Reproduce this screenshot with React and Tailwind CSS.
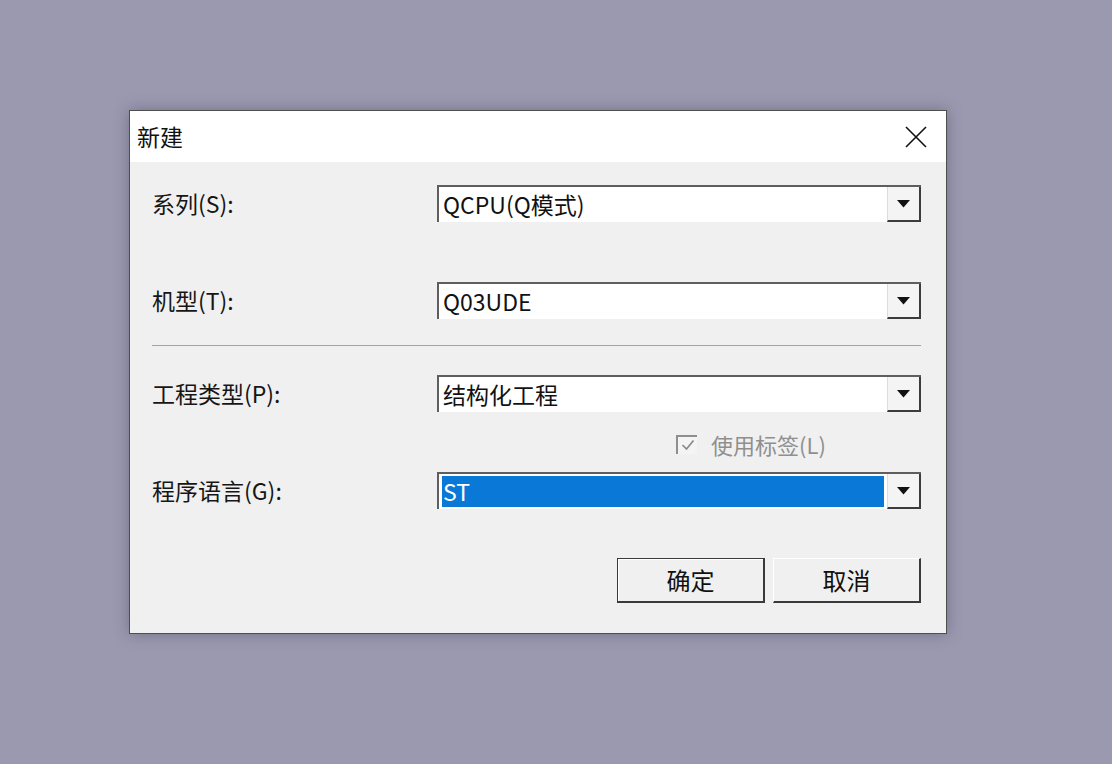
import React from 'react';

function Arrow() {
  return (
    <svg width="13" height="8" viewBox="0 0 13 8" className="block">
      <path d="M0 0 H13 L6.5 7.5 Z" fill="#111" />
    </svg>
  );
}

function Combo({ value, selected }) {
  return (
    <div className="flex h-[37px] flex-1 border-t-2 border-l-2 border-[#5e5e5e] bg-white">
      <div className="flex flex-1 items-center pl-[3px] pr-[3px] py-[2px]">
        <div
          className={
            selected
              ? 'flex h-full w-full items-center bg-[#0a78d7] pl-[1px] text-white'
              : 'flex h-full w-full items-center pl-[1px] text-[#111]'
          }
        >
          {value}
        </div>
      </div>
      <div className="flex w-[34px] items-center justify-center border-l border-[#dcdcdc] border-r-2 border-b-2 border-r-[#3c3c3c] border-b-[#3c3c3c] bg-[#f4f4f4]">
        <Arrow />
      </div>
    </div>
  );
}

function Row({ label, children }) {
  return (
    <div className="flex h-[37px] items-center">
      <div className="w-[285px] text-[#161616]">{label}</div>
      {children}
    </div>
  );
}

export default function App() {
  return (
    <div
      className="min-h-screen w-full bg-[#9b99b0] pt-[110px] pl-[129px]"
      style={{ fontFamily: '"Noto Sans CJK SC", "Noto Sans", sans-serif' }}
    >
      <div className="w-[818px] border border-[#4e4e4e] bg-[#f0f0f0] text-[23px] leading-none shadow-[0_0_14px_rgba(40,40,60,0.35)]">
        <div className="flex h-[51px] items-center justify-between bg-white pl-[7px] pr-[19px]">
          <span className="text-[#111]">新建</span>
          <svg width="22" height="22" viewBox="0 0 22 22">
            <path d="M1 1 L21 21 M21 1 L1 21" stroke="#111" strokeWidth="1.6" />
          </svg>
        </div>

        <div className="pt-[23px] pb-[30px] pl-[22px] pr-[25px]">
          <Row label="系列(S):">
            <Combo value="QCPU(Q模式)" />
          </Row>
          <div className="mt-[60px]">
            <Row label="机型(T):">
              <Combo value="Q03UDE" />
            </Row>
          </div>
          <div className="mt-[26px] h-px bg-[#a3a3a3]" />
          <div className="mt-[29px]">
            <Row label="工程类型(P):">
              <Combo value="结构化工程" />
            </Row>
          </div>
          <div className="mt-[20px] flex h-[24px] items-center pl-[524px]">
            <div className="flex h-[19px] w-[21px] items-center justify-center border-t-2 border-l-2 border-[#8e8e8e] bg-[#f4f4f4]">
              <svg width="14" height="12" viewBox="0 0 14 12">
                <path d="M1.5 6 L5.5 10 L12.5 1.5" fill="none" stroke="#8a8a8a" strokeWidth="1.7" />
              </svg>
            </div>
            <span className="ml-[14px] text-[22px] text-[#8f8f8f]">使用标签(L)</span>
          </div>
          <div className="mt-[16px]">
            <Row label="程序语言(G):">
              <Combo value="ST" selected />
            </Row>
          </div>
          <div className="mt-[49px] flex justify-end gap-[8px]">
            <button className="flex h-[45px] w-[148px] items-center justify-center border border-[#3a3a3a] border-r-2 border-b-2 bg-[#f0f0f0] text-[24px] text-[#111] shadow-[inset_1px_1px_0_#ffffff]">
              确定
            </button>
            <button className="flex h-[45px] w-[148px] items-center justify-center border border-t-[#ffffff] border-l-[#ffffff] border-r-2 border-b-2 border-r-[#3a3a3a] border-b-[#3a3a3a] bg-[#f0f0f0] text-[24px] text-[#111]">
              取消
            </button>
          </div>
        </div>
      </div>
    </div>
  );
}
